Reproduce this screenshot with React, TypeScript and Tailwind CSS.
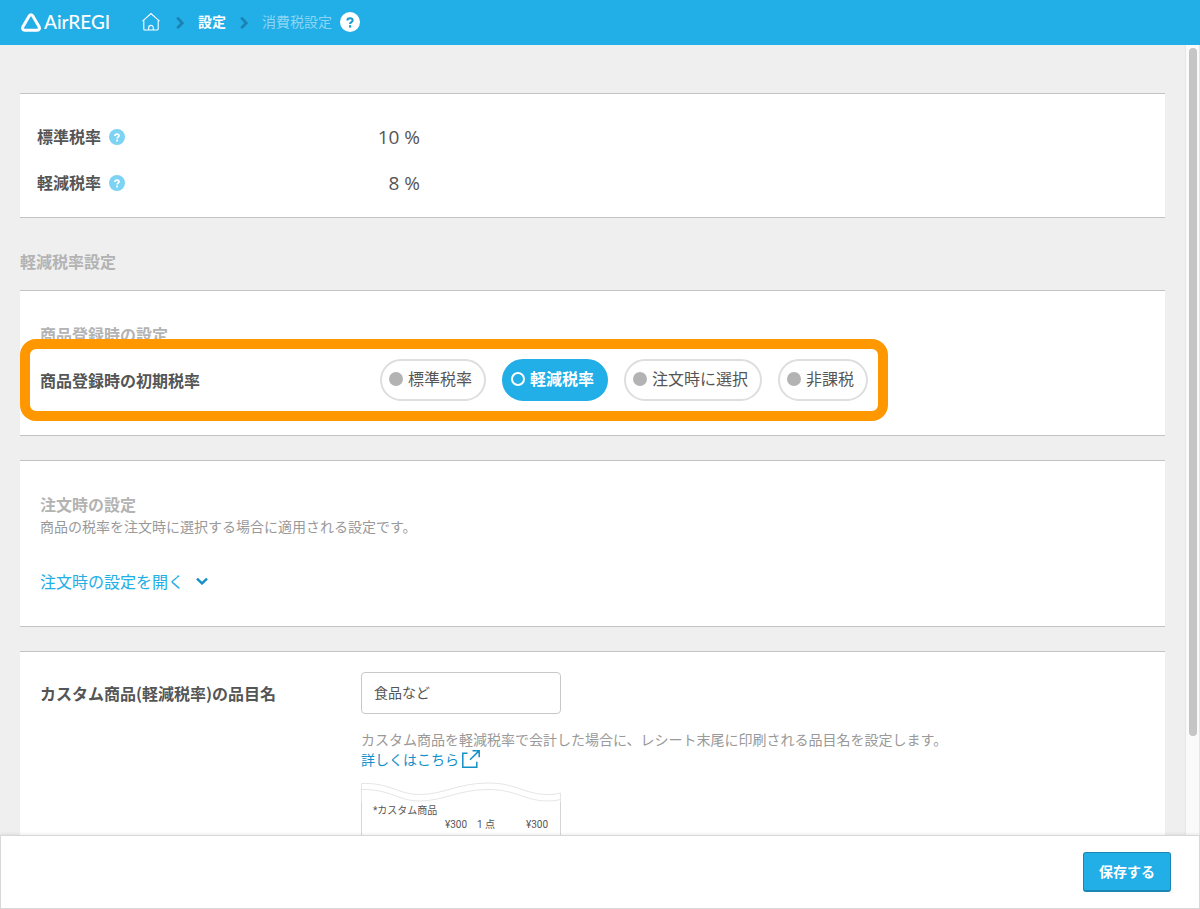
import React, { useState } from "react";

const taxTypes = ["標準税率", "軽減税率", "注文時に選択", "非課税"];

const rates = [
  { name: "標準税率", value: "10 %" },
  { name: "軽減税率", value: "8 %" },
];

const HelpIcon: React.FC<{ className: string }> = ({ className }) => (
  <svg viewBox="0 0 20 20" className={className} aria-hidden="true">
    <circle cx="10" cy="10" r="10" fill="currentColor" />
    <path
      d="M7.4 8.6c0-1.5 1.100-2.300 2.600-2.300s2.600.8 2.600 2.100c0 1.700-2.500 1.800-2.500 3.500"
      fill="none"
      className="stroke-(--mark)"
      strokeWidth="2.1"
    />
    <rect x="9" y="13.2" width="2.2" height="2.4" className="fill-(--mark)" />
  </svg>
);

const Separator: React.FC = () => (
  <svg viewBox="0 0 8 14" className="h-3.5 w-2" aria-hidden="true">
    <path
      d="M1.2 2.6 6.3 8l-5.100 5.100"
      fill="none"
      stroke="#1b82b0"
      strokeWidth="2.6"
    />
  </svg>
);

const Header: React.FC = () => (
  <header className="flex h-[45px] shrink-0 items-center bg-[#22aee6] pb-0.5 pl-5 text-sm text-white">
    <a href="#" className="flex items-center gap-0.5">
      <svg viewBox="0 0 22 20" className="h-5 w-[22px]" aria-hidden="true">
        <path
          d="M9.500 3.600 3 14.400c-1.100 1.900-.3 3.800 1.900 3.800h12.200c2.200 0 3-1.900 1.900-3.800L12.500 3.600c-.8-1.200-2.200-1.200-3 0Z"
          fill="none"
          stroke="white"
          strokeWidth="3"
          strokeLinejoin="round"
        />
      </svg>
      <span className="w-[66px] font-['Lato',sans-serif] text-[19px] leading-6 font-medium">
        AirREGI
      </span>
    </a>
    <nav className="ml-8 flex items-center">
      <a href="#" aria-label="ホーム">
        <svg
          viewBox="0 0 18 20"
          className="h-5 w-[18px]"
          fill="none"
          stroke="white"
          strokeWidth="1.1"
          aria-hidden="true"
        >
          <path d="M.5 9.200 9 1.500l8.500 7.700" />
          <path d="M1.800 8.500v8.600a.9.900 0 0 0 .9.900h12.600a.9.900 0 0 0 .9-.9V8.500M6.700 18v-2.300a2.300 2.300 0 0 1 4.600 0V18" />
        </svg>
      </a>
      <span className="mr-3.5 ml-4">
        <Separator />
      </span>
      <a href="#" className="pb-0.5 font-bold">
        設定
      </a>
      <span className="mx-3.5">
        <Separator />
      </span>
      <span className="pb-0.5 text-[#8dd5f3]">消費税設定</span>
      <button type="button" aria-label="ヘルプ" className="ml-2">
        <HelpIcon className="size-5 text-white [--mark:#1b9bd0]" />
      </button>
    </nav>
  </header>
);

const Card: React.FC<{ className?: string; children: React.ReactNode }> = ({
  className = "",
  children,
}) => (
  <section className={`border-y border-[#c3c3c3] bg-white ${className}`}>
    {children}
  </section>
);

const Receipt: React.FC = () => (
  <div className="mt-3 w-[200px] font-['Roboto','Noto_Sans_CJK_JP',sans-serif] text-[10px] leading-[14px] text-[#555]">
    <svg
      viewBox="0 0 200 20"
      className="block h-5 w-full"
      fill="none"
      stroke="#dedede"
      strokeWidth="0.8"
      aria-hidden="true"
    >
      <path d="M.5 20V1.500C30 .5 36 12.500 59 12.500S98 1 127 1s36 11.500 60 11.500c6 0 9-.8 12.500-1.500v9" />
      <path d="M.5 7.500C30 7 36 19 59 19S98 7.500 127 7.500 163 19 187 19c6 0 9-.8 12.500-1.500" />
    </svg>
    <div className="border-x border-[#d5d5d5] pt-0.5 pb-10 pl-[11px]">
      <p>*カスタム商品</p>
      <p className="flex pl-[72px]">
        <span className="w-8">¥300</span>
        <span className="w-[49px]">1 点</span>
        <span>¥300</span>
      </p>
    </div>
  </div>
);

const App: React.FC = () => {
  const [selected, setSelected] = useState("軽減税率");
  const [itemName, setItemName] = useState("食品など");

  return (
    <div className="flex h-screen flex-col bg-[#efefef] font-['Noto_Sans_CJK_JP',sans-serif] text-[#555]">
      <Header />
      <div className="flex min-h-0 flex-1">
        <main className="min-w-0 flex-1 overflow-hidden px-5 pt-12">
          <Card className="pt-5 pb-[11px] pl-[17px]">
            {rates.map((rate) => (
              <div key={rate.name} className="flex h-[46px] items-center">
                <div className="flex w-[300px] items-center gap-2">
                  <span className="pb-0.5 font-bold">{rate.name}</span>
                  <button type="button" aria-label={`${rate.name}のヘルプ`}>
                    <HelpIcon className="size-4 text-[#7dd3f3] [--mark:white]" />
                  </button>
                </div>
                <span className="w-[83px] text-right font-['Open_Sans',sans-serif] text-[19px]">
                  {rate.value}
                </span>
              </div>
            ))}
          </Card>

          <h2 className="pt-[31px] pb-[17px] leading-6 font-bold text-[#b3b3b3]">
            軽減税率設定
          </h2>

          <Card className="pt-[31px] pb-[14px]">
            <h3 className="pl-5 leading-6 font-bold text-[#b3b3b3]">
              商品登録時の設定
            </h3>
            {/* highlighted row */}
            <fieldset className="relative -mt-[7px] w-fit rounded-2xl border-[10px] border-[#ff9800] bg-white p-2.5">
              <div className="flex items-center gap-4">
                <span className="w-[324px] font-bold">
                  商品登録時の初期税率
                </span>
                {taxTypes.map((type) => (
                  <label
                    key={type}
                    className="flex h-[42px] cursor-pointer items-center gap-[5px] rounded-full border-2 border-[#dedede] pr-3 pb-0.5 pl-[7px] has-checked:border-[#22aee6] has-checked:bg-[#22aee6] has-checked:font-bold has-checked:text-white"
                  >
                    <input
                      type="radio"
                      name="tax"
                      checked={selected === type}
                      onChange={() => setSelected(type)}
                      className="size-3.5 appearance-none rounded-full bg-[#b3b3b3] checked:border-2 checked:border-white checked:bg-transparent"
                    />
                    <span className="pb-0.5">{type}</span>
                  </label>
                ))}
              </div>
            </fieldset>
          </Card>

          <Card className="mt-6 px-5 pt-[31px] pb-8">
            <h3 className="leading-6 font-bold text-[#b3b3b3]">注文時の設定</h3>
            <p className="text-sm leading-5 text-[#999]">
              商品の税率を注文時に選択する場合に適用される設定です。
            </p>
            <button
              type="button"
              className="mt-[33px] mb-px flex items-center gap-3 leading-6 text-[#22aee6]"
            >
              注文時の設定を開く
              <svg viewBox="0 0 12 8" className="h-2 w-3" aria-hidden="true">
                <path
                  d="M1 1.600 6 6.400l5-4.800"
                  fill="none"
                  stroke="#1490c8"
                  strokeWidth="2.4"
                />
              </svg>
            </button>
          </Card>

          <Card className="mt-6 flex px-5 pt-5">
            <label
              htmlFor="item-name"
              className="flex h-[42px] w-[321px] shrink-0 items-center font-bold"
            >
              カスタム商品(軽減税率)の品目名
            </label>
            <div className="text-sm leading-5">
              <input
                id="item-name"
                type="text"
                value={itemName}
                onChange={(e) => setItemName(e.target.value)}
                className="block h-[42px] w-[200px] rounded border border-[#c8c8c8] bg-white px-3 pb-0.5"
              />
              <p className="mt-[15px] text-[#999]">
                カスタム商品を軽減税率で会計した場合に、レシート末尾に印刷される品目名を設定します。
              </p>
              <a
                href="#"
                className="mb-[13px] flex items-center gap-[3px] text-[#1490c8]"
              >
                詳しくはこちら
                <svg
                  viewBox="0 0 18 18"
                  className="size-[18px]"
                  fill="none"
                  stroke="currentColor"
                  strokeWidth="1.5"
                  aria-hidden="true"
                >
                  <path d="M5.500 3.300H.8v13.900h14v-5.500M8 9.800 17 .9M10.500.8h6.700v6.500" />
                </svg>
              </a>
              <Receipt />
            </div>
          </Card>
        </main>
        {/* scrollbar */}
        <div className="w-[15px] border-x border-[#e6e6e6] bg-[#fafafa] pt-[3px] pl-[3px]">
          <div className="h-[87.4%] w-2 rounded-full bg-[#c5c5c5]" />
        </div>
      </div>
      <footer className="relative flex shrink-0 justify-end border border-[#d8d8d8] bg-white px-7 py-4 shadow-[0_0_4px_rgba(0,0,0,0.12)]">
        <button
          type="button"
          className="h-10 rounded-[3px] border border-b-2 border-[#1a86b4] bg-[#22aee6] px-[15px] pb-0.5 text-sm font-bold text-white"
        >
          保存する
        </button>
      </footer>
    </div>
  );
};

export default App;
